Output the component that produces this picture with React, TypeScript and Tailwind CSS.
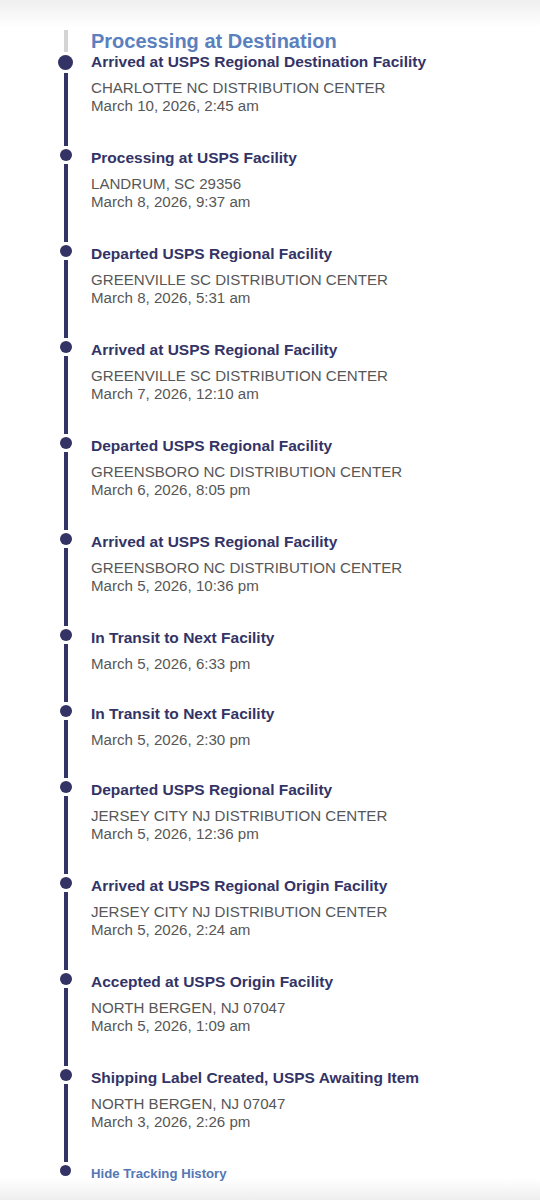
import React from 'react';

type TrackEvent = {
  title: string;
  location?: string;
  date: string;
};

const events: TrackEvent[] = [
  { title: 'Arrived at USPS Regional Destination Facility', location: 'CHARLOTTE NC DISTRIBUTION CENTER', date: 'March 10, 2026, 2:45 am' },
  { title: 'Processing at USPS Facility', location: 'LANDRUM, SC 29356', date: 'March 8, 2026, 9:37 am' },
  { title: 'Departed USPS Regional Facility', location: 'GREENVILLE SC DISTRIBUTION CENTER', date: 'March 8, 2026, 5:31 am' },
  { title: 'Arrived at USPS Regional Facility', location: 'GREENVILLE SC DISTRIBUTION CENTER', date: 'March 7, 2026, 12:10 am' },
  { title: 'Departed USPS Regional Facility', location: 'GREENSBORO NC DISTRIBUTION CENTER', date: 'March 6, 2026, 8:05 pm' },
  { title: 'Arrived at USPS Regional Facility', location: 'GREENSBORO NC DISTRIBUTION CENTER', date: 'March 5, 2026, 10:36 pm' },
  { title: 'In Transit to Next Facility', date: 'March 5, 2026, 6:33 pm' },
  { title: 'In Transit to Next Facility', date: 'March 5, 2026, 2:30 pm' },
  { title: 'Departed USPS Regional Facility', location: 'JERSEY CITY NJ DISTRIBUTION CENTER', date: 'March 5, 2026, 12:36 pm' },
  { title: 'Arrived at USPS Regional Origin Facility', location: 'JERSEY CITY NJ DISTRIBUTION CENTER', date: 'March 5, 2026, 2:24 am' },
  { title: 'Accepted at USPS Origin Facility', location: 'NORTH BERGEN, NJ 07047', date: 'March 5, 2026, 1:09 am' },
  { title: 'Shipping Label Created, USPS Awaiting Item', location: 'NORTH BERGEN, NJ 07047', date: 'March 3, 2026, 2:26 pm' },
];

function EventRow({ event, first }: { event: TrackEvent; first: boolean }) {
  return (
    <div className="flex gap-[18px]">
      <div className="flex w-[15px] flex-col items-center">
        <div className={first ? 'mt-[3px] h-[15px] w-[15px] rounded-full bg-[#333366]' : 'mt-[3px] h-[12px] w-[12px] rounded-full bg-[#333366]'} />
        <div className="mt-[3px] w-[4px] flex-1 bg-[#333366]" />
      </div>
      <div className={event.location ? (first ? 'pb-[31px]' : 'pt-[2px] pb-[31px]') : 'pt-[2px] pb-[29px]'}>
        <div className="text-[15.5px] leading-[20px] font-bold text-[#333366]">{event.title}</div>
        <div className="mt-[7px] text-[15.1px] leading-[18px] text-[#575757]">
          {event.location && <div>{event.location}</div>}
          <div>{event.date}</div>
        </div>
      </div>
    </div>
  );
}

export default function App() {
  return (
    <div
      className="h-[1200px] w-[540px] overflow-hidden bg-[linear-gradient(to_bottom,#efefef_0px,#ffffff_28px,#ffffff_1178px,#eeeeee_1200px)] pt-[30px] pl-[58px]"
      style={{ fontFamily: '"Liberation Sans", Arial, Helvetica, sans-serif' }}
    >
      <div className="flex h-[22px] gap-[18px]">
        <div className="flex w-[15px] justify-center">
          <div className="h-full w-[4px] bg-[#d4d4d6]" />
        </div>
        <div className="text-[20px] leading-[22px] font-bold text-[#5a80bd]">Processing at Destination</div>
      </div>

      {events.map((e, i) => (
        <EventRow key={i} event={e} first={i === 0} />
      ))}

      <div className="flex gap-[18px]">
        <div className="flex w-[15px] justify-center">
          <div className="mt-[3px] h-[11px] w-[11px] rounded-full bg-[#333366]" />
        </div>
        <div className="pt-[4px] text-[13.2px] leading-[16px] font-bold text-[#5577b4]">Hide Tracking History</div>
      </div>
    </div>
  );
}
